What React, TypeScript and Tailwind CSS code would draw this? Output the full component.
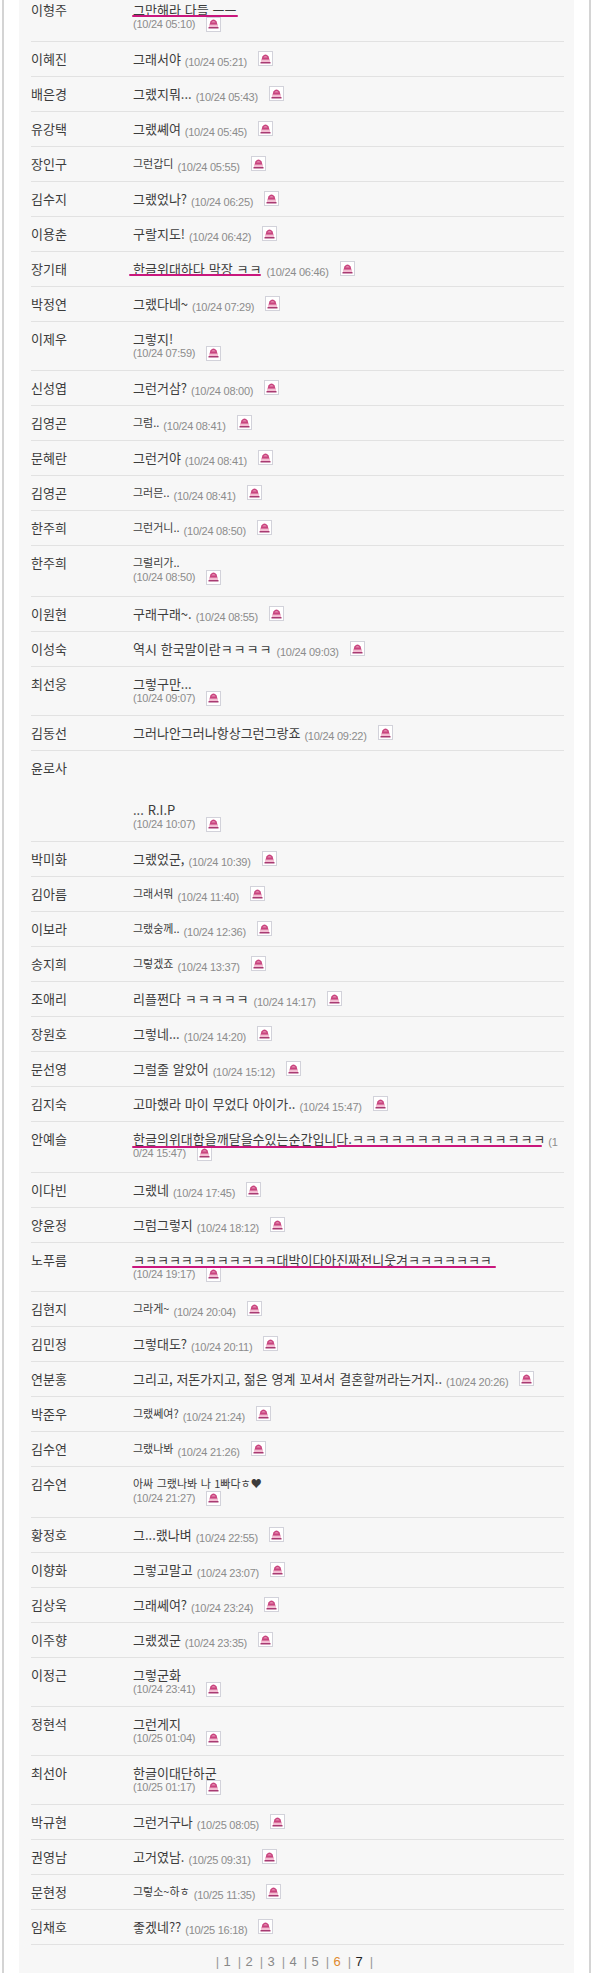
const kr = "font-['Noto_Sans_CJK_KR','Noto_Sans',sans-serif]";

type Mark = { left: number; width: number; top: number };

type Row = {
  name: string;
  text: string;
  date: string;
  tail?: string;
  wrap?: boolean;
  small?: boolean;
  tall?: boolean;
  pre?: number;
  marks?: Mark[];
  head?: string;
};

const rows: Row[] = [
  { name: "이형주", text: "그만해라 다들 ㅡㅡ", date: "(10/24 05:10)", wrap: true, marks: [{ left: -1, width: 106, top: 13 }] },
  { name: "이혜진", text: "그래서야", date: "(10/24 05:21)" },
  { name: "배은경", text: "그랬지뭐...", date: "(10/24 05:43)" },
  { name: "유강택", text: "그랬쎼여", date: "(10/24 05:45)" },
  { name: "장인구", text: "그런갑디", date: "(10/24 05:55)", small: true },
  { name: "김수지", text: "그랬었나?", date: "(10/24 06:25)" },
  { name: "이용춘", text: "구랄지도!", date: "(10/24 06:42)" },
  { name: "장기태", text: "한글위대하다 막장 ", tail: "ㅋㅋ", date: "(10/24 06:46)", marks: [{ left: -4, width: 132, top: 13 }] },
  { name: "박정연", text: "그랬다네~", date: "(10/24 07:29)" },
  { name: "이제우", text: "그렇지!", date: "(10/24 07:59)", wrap: true },
  { name: "신성엽", text: "그런거삼?", date: "(10/24 08:00)" },
  { name: "김영곤", text: "그럼..", date: "(10/24 08:41)", small: true },
  { name: "문혜란", text: "그런거야", date: "(10/24 08:41)" },
  { name: "김영곤", text: "그러믄..", date: "(10/24 08:41)", small: true },
  { name: "한주희", text: "그런거니..", date: "(10/24 08:50)", small: true },
  { name: "한주희", text: "그럴리가..", date: "(10/24 08:50)", wrap: true, small: true, tall: true },
  { name: "이원현", text: "구래구래~.", date: "(10/24 08:55)" },
  { name: "이성숙", text: "역시 한국말이란", tail: "ㅋㅋㅋㅋ", date: "(10/24 09:03)" },
  { name: "최선웅", text: "그렇구만...", date: "(10/24 09:07)", wrap: true },
  { name: "김동선", text: "그러나안그러나항상그런그랑죠", date: "(10/24 09:22)" },
  { name: "윤로사", text: "... R.I.P", date: "(10/24 10:07)", wrap: true, pre: 3 },
  { name: "박미화", text: "그랬었군,", date: "(10/24 10:39)" },
  { name: "김아름", text: "그래서뭐", date: "(10/24 11:40)", small: true },
  { name: "이보라", text: "그랬숭께..", date: "(10/24 12:36)", small: true },
  { name: "송지희", text: "그렇겠죠", date: "(10/24 13:37)", small: true },
  { name: "조애리", text: "리플쩐다 ", tail: "ㅋㅋㅋㅋㅋ", date: "(10/24 14:17)" },
  { name: "장원호", text: "그렇네...", date: "(10/24 14:20)" },
  { name: "문선영", text: "그럴줄 알았어", date: "(10/24 15:12)" },
  { name: "김지숙", text: "고마했라 마이 무었다 아이가..", date: "(10/24 15:47)" },
  {
    name: "안예슬",
    text: "한글의위대함을깨달을수있는순간입니다.",
    tail: "ㅋㅋㅋㅋㅋㅋㅋㅋㅋㅋㅋㅋㅋㅋㅋ",
    head: "(1",
    date: "0/24 15:47)",
    wrap: true,
    tall: true,
    marks: [
      { left: -1, width: 205, top: 15 },
      { left: 204, width: 205, top: 14 },
    ],
  },
  { name: "이다빈", text: "그랬네", date: "(10/24 17:45)" },
  { name: "양윤정", text: "그럼그렇지", date: "(10/24 18:12)" },
  {
    name: "노푸름",
    text: "ㅋㅋㅋㅋㅋㅋㅋㅋㅋㅋㅋㅋ대박이다아진짜전니웃겨ㅋㅋㅋㅋㅋㅋㅋ",
    date: "(10/24 19:17)",
    wrap: true,
    marks: [{ left: -1, width: 364, top: 14 }],
  },
  { name: "김현지", text: "그라게~", date: "(10/24 20:04)", small: true },
  { name: "김민정", text: "그렇대도?", date: "(10/24 20:11)" },
  { name: "연분홍", text: "그리고, 저돈가지고, 젊은 영계 꼬셔서 결혼할꺼라는거지..", date: "(10/24 20:26)" },
  { name: "박준우", text: "그랬쎄여?", date: "(10/24 21:24)", small: true },
  { name: "김수연", text: "그랬나봐", date: "(10/24 21:26)", small: true },
  { name: "김수연", text: "아싸 그랬나봐 나 1빠다ㅎ♥", date: "(10/24 21:27)", wrap: true, small: true, tall: true },
  { name: "황정호", text: "그...랬나벼", date: "(10/24 22:55)" },
  { name: "이향화", text: "그렇고말고", date: "(10/24 23:07)" },
  { name: "김상욱", text: "그래쎄여?", date: "(10/24 23:24)" },
  { name: "이주향", text: "그랬겠군", date: "(10/24 23:35)" },
  { name: "이정근", text: "그렇군화", date: "(10/24 23:41)", wrap: true },
  { name: "정현석", text: "그런게지", date: "(10/25 01:04)", wrap: true },
  { name: "최선아", text: "한글이대단하군", date: "(10/25 01:17)", wrap: true },
  { name: "박규현", text: "그런거구나", date: "(10/25 08:05)" },
  { name: "권영남", text: "고거였남.", date: "(10/25 09:31)" },
  { name: "문현정", text: "그렇소~하ㅎ", date: "(10/25 11:35)", small: true },
  { name: "임채호", text: "좋겠네??", date: "(10/25 16:18)" },
];

const ReportIcon = () => (
  <span className="ml-[11px] flex h-[15px] w-[15px] shrink-0 items-center justify-center border border-[#d2d2da] bg-white">
    <svg width="11" height="12" viewBox="0 0 11 12">
      <path d="M1 9 L2.4 3.6 Q5.5 -0.6 8.6 3.6 L10 9 Z" fill="#c9457f" />
      <path d="M3.4 4.4 Q5.5 1.8 7.6 4.4 Z" fill="#e48bb0" />
      <rect x="1" y="6.6" width="9" height="2.4" fill="#f3bdd2" />
      <rect x="0.5" y="9" width="10" height="1.5" fill="#a83a72" />
    </svg>
  </span>
);

const DateText = ({ children }: { children: string }) => (
  <span className="font-['Liberation_Sans',sans-serif] text-[11px] tracking-[-0.25px] text-[#8c8c8c]">{children}</span>
);

const CommentRow = ({ row, first }: { row: Row; first: boolean }) => (
  <div className={`flex border-b border-[#e2e2e2] ${row.tall ? "pb-[12px]" : "pb-[10px]"} ${first ? "pt-[2px]" : "pt-[9px]"}`}>
    <div className="h-[15px] w-[102px] shrink-0 text-[13px] leading-[15px] text-[#3c3c3c]">{row.name}</div>
    <div className="min-w-0 flex-1">
      {row.pre ? <div style={{ height: row.pre * 14 }} /> : null}
      <div className="relative flex h-[15px] items-center whitespace-pre">
        <span className={`${row.small ? "text-[11px]" : "text-[13px]"} leading-[15px] text-[#3c3c3c] [word-spacing:1px]`}>
          {row.text}
          {row.tail && <span className="tracking-[1px]">{row.tail}</span>}
        </span>
        {!row.wrap && (
          <>
            <span className="ml-[4px]">
              <DateText>{row.date}</DateText>
            </span>
            <ReportIcon />
          </>
        )}
        {row.head && (
          <span className="ml-[2px]">
            <DateText>{row.head}</DateText>
          </span>
        )}
        {row.marks?.map((m) => (
          <span
            key={m.left}
            className="absolute h-[2px] rounded-sm bg-[#c9177d]"
            style={{ left: m.left, width: m.width, top: m.top }}
          />
        ))}
      </div>
      {row.wrap && (
        <div className="flex h-[14px] items-center whitespace-nowrap">
          <DateText>{row.date}</DateText>
          <ReportIcon />
        </div>
      )}
    </div>
  </div>
);

const pages = ["1", "2", "3", "4", "5", "6", "7"];

export default function App() {
  return (
    <div className={`${kr} h-[1973px] w-[596px] overflow-hidden bg-white pl-[2px] pr-[5px]`}>
      <div className="h-full border-x-2 border-[#d4d4d4] px-[15px]">
        <div className="h-full bg-[#f7f7f7] pl-[12px] pr-[10px]">
          {rows.map((row, i) => (
            <CommentRow key={i} row={row} first={i === 0} />
          ))}
          <div className="flex justify-center pr-[6px] pt-[10px] font-['Liberation_Sans',sans-serif] text-[13px] leading-[14px]">
            <span className="text-[#999]">|</span>
            {pages.map((p) => (
              <span key={p} className="flex w-[22px] justify-end">
                <span className={`mr-[7px] ${p === "6" ? "text-[#e08a2e]" : p === "7" ? "text-[#222]" : "text-[#888]"}`}>{p}</span>
                <span className="text-[#999]">|</span>
              </span>
            ))}
          </div>
        </div>
      </div>
    </div>
  );
}
